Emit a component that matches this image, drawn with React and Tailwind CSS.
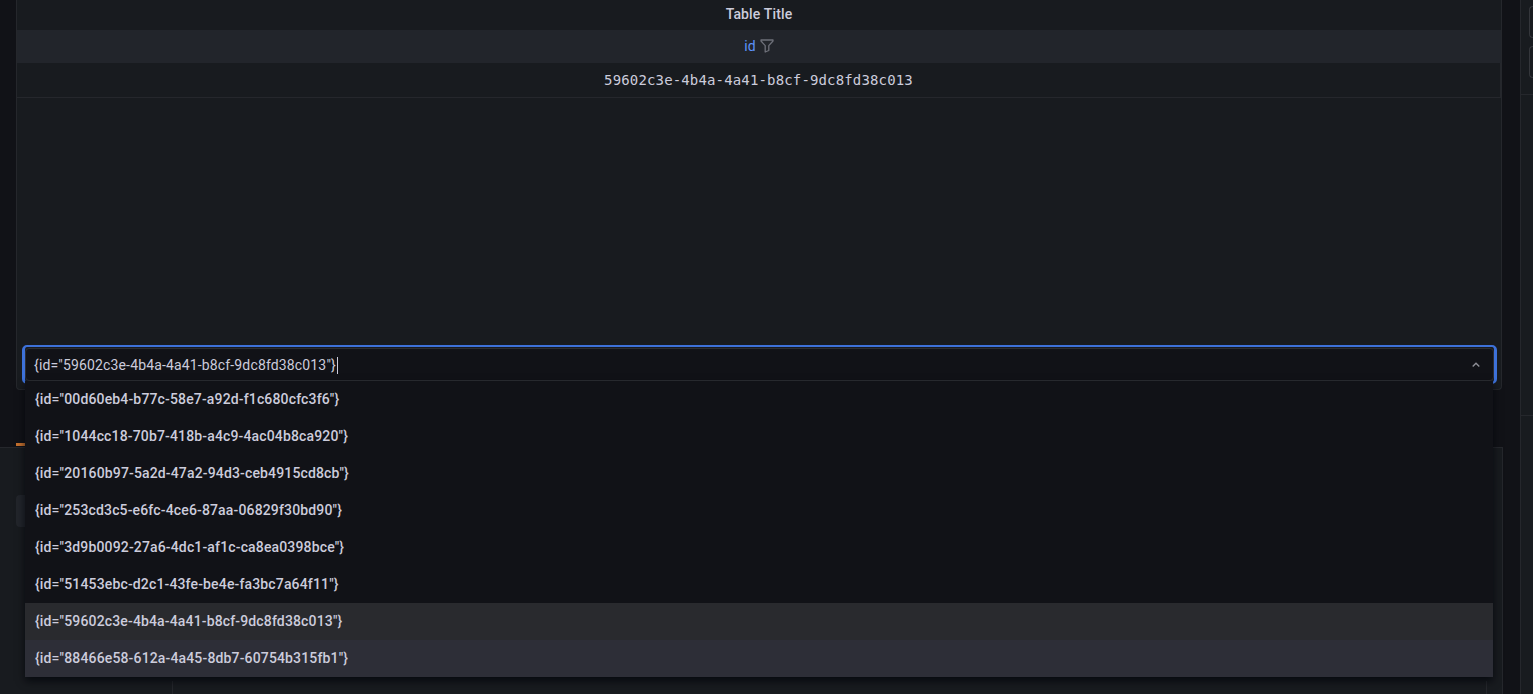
const sans = "font-['Roboto','Liberation_Sans',sans-serif]";
const options = [
  '{id="00d60eb4-b77c-58e7-a92d-f1c680cfc3f6"}',
  '{id="1044cc18-70b7-418b-a4c9-4ac04b8ca920"}',
  '{id="20160b97-5a2d-47a2-94d3-ceb4915cd8cb"}',
  '{id="253cd3c5-e6fc-4ce6-87aa-06829f30bd90"}',
  '{id="3d9b0092-27a6-4dc1-af1c-ca8ea0398bce"}',
  '{id="51453ebc-d2c1-43fe-be4e-fa3bc7a64f11"}',
  '{id="59602c3e-4b4a-4a41-b8cf-9dc8fd38c013"}',
  '{id="88466e58-612a-4a45-8db7-60754b315fb1"}',
];

function Funnel() {
  return (
    <svg width="14" height="14" viewBox="0 0 14 14" fill="none" stroke="#6e7079" strokeWidth="1.3" strokeLinejoin="round">
      <path d="M1 1h12v1L8.8 6.6v4.9L5.2 13V6.6L1 2z" />
    </svg>
  );
}

function Select() {
  return (
    <div className="mb-[5px] ml-[5px] mr-[4px] rounded-[5px] border-x-[3px] border-y-2 border-[#3d71d9] py-px">
      <div className="relative flex h-[33px] items-center justify-between rounded-sm border border-[#2c2e33] bg-[#111217] pl-2 pr-[9px] pt-px text-sm text-[#ccccdc]">
        <div className="flex items-center">
          <span>{options[6]}</span>
          <span className="ml-px h-[17px] w-px bg-[#ccccdc]" />
        </div>
        <svg width="16" height="16" viewBox="0 0 16 16" fill="none" stroke="#8e8f97" strokeWidth="1.4">
          <path d="M4.7 9.6 8 6.3l3.3 3.3" />
        </svg>
        <div className="absolute left-[-1px] top-[calc(100%+1px)] w-[1468px] bg-[#111217] shadow-[0_4px_8px_rgba(1,4,9,0.75)]">
          {options.map((o, i) => (
            <div
              key={o}
              className={`flex h-[37px] items-center pb-px pl-[10px] text-sm font-medium text-[#ccccdc] ${
                i === 6 ? 'bg-[#292a2e]' : i === 7 ? 'bg-[#2d2e37]' : ''
              }`}
            >
              {o}
            </div>
          ))}
        </div>
      </div>
    </div>
  );
}

export default function App() {
  return (
    <div className={`flex h-[694px] w-[1533px] overflow-hidden bg-[#111217] tracking-[0.15px] ${sans}`}>
      <div className="flex w-[1520px] flex-col">
        <div className="ml-4 flex h-[390px] w-[1486px] flex-col rounded-b-sm border-x border-b border-[#25272c] bg-[#181b1f]">
          <div className="flex h-[30px] items-center justify-center pb-[2px] text-sm font-medium text-[#ccccdc]">Table Title</div>
          <div className="flex h-[33px] items-center justify-center gap-1 bg-[#22252b] pb-[2px] text-sm text-[#5d93fb]">
            <span>id</span>
            <Funnel />
          </div>
          <div className="flex h-[35px] items-center justify-center border-r border-b border-[#25272c] font-['DejaVu_Sans_Mono',monospace] text-sm text-[#ccccdc]">
            59602c3e-4b4a-4a41-b8cf-9dc8fd38c013
          </div>
          <div className="flex-1" />
          <Select />
        </div>

        <div className="ml-4 mt-[53px] h-[3px] w-[10px] bg-[#c4702e]" />

        <div className="mt-px flex w-[1503px] flex-1 flex-col border-r border-t border-[#25272c] bg-[#181b1f] pl-4 pt-[47px]">
          <div className="h-[32px] w-[20px] rounded-sm bg-[#22252b]" />
          <div className="ml-[156px] mt-auto h-[13px] w-[1315px] border-x border-[#25272c]" />
        </div>
      </div>

      <div className="flex w-[13px] flex-col border-l border-[#25272c] bg-[#181b1f]">
        <div className="flex h-[95px] flex-col gap-2 border-b border-[#25272c] pl-2 pt-[6px]">
          <div className="h-[32px] w-[4px] rounded-l-sm border-y border-l border-[#34363b]" />
          <div className="h-[32px] w-[4px] rounded-l-sm border-y border-l border-[#34363b]" />
        </div>
        <div className="h-[321px] border-b border-[#25272c]" />
      </div>
    </div>
  );
}
